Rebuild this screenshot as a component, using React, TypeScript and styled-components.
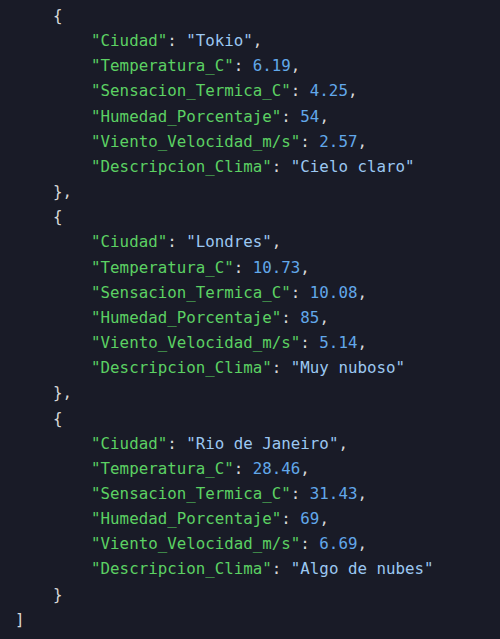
import React from "react";
import styled, { createGlobalStyle } from "styled-components";

const Global = createGlobalStyle`
  html, body {
    margin: 0;
    padding: 0;
    background: #191b27;
  }
`;

const CodeBlock = styled.pre`
  margin: 0;
  padding: 3px 0 0 15px;
  min-height: 639px;
  box-sizing: border-box;
  background: #191b27;
  font-family: "DejaVu Sans Mono", "Liberation Mono", monospace;
  font-size: 15.8px;
  line-height: 25.17px;
  color: #d4d4d4;
  white-space: pre;
`;

const Line = styled.div<{ $level: number }>`
  display: block;
  height: 25.17px;
  padding-left: ${(p) => p.$level * 4}ch;
`;

const Key = styled.span`
  color: #5cd163;
`;

const Str = styled.span`
  color: #9cc8f2;
`;

const Num = styled.span`
  color: #62a8ea;
`;

const Punct = styled.span`
  color: #d8d8d8;
`;

type Value = string | number;
type City = [string, Value][];

const cities: City[] = [
  [
    ["Ciudad", "Tokio"],
    ["Temperatura_C", 6.19],
    ["Sensacion_Termica_C", 4.25],
    ["Humedad_Porcentaje", 54],
    ["Viento_Velocidad_m/s", 2.57],
    ["Descripcion_Clima", "Cielo claro"],
  ],
  [
    ["Ciudad", "Londres"],
    ["Temperatura_C", 10.73],
    ["Sensacion_Termica_C", 10.08],
    ["Humedad_Porcentaje", 85],
    ["Viento_Velocidad_m/s", 5.14],
    ["Descripcion_Clima", "Muy nuboso"],
  ],
  [
    ["Ciudad", "Rio de Janeiro"],
    ["Temperatura_C", 28.46],
    ["Sensacion_Termica_C", 31.43],
    ["Humedad_Porcentaje", 69],
    ["Viento_Velocidad_m/s", 6.69],
    ["Descripcion_Clima", "Algo de nubes"],
  ],
];

const fmt = (v: number) => String(v);

export default function App() {
  return (
    <>
      <Global />
      <CodeBlock>
        {cities.map((city, ci) => (
          <React.Fragment key={ci}>
            <Line $level={1}>
              <Punct>{"{"}</Punct>
            </Line>
            {city.map(([k, v], i) => (
              <Line $level={2} key={k}>
                <Key>"{k}"</Key>
                <Punct>: </Punct>
                {typeof v === "number" ? <Num>{fmt(v)}</Num> : <Str>"{v}"</Str>}
                {i < city.length - 1 && <Punct>,</Punct>}
              </Line>
            ))}
            <Line $level={1}>
              <Punct>{"}"}</Punct>
              {ci < cities.length - 1 && <Punct>,</Punct>}
            </Line>
          </React.Fragment>
        ))}
        <Line $level={0}>
          <Punct>]</Punct>
        </Line>
      </CodeBlock>
    </>
  );
}
